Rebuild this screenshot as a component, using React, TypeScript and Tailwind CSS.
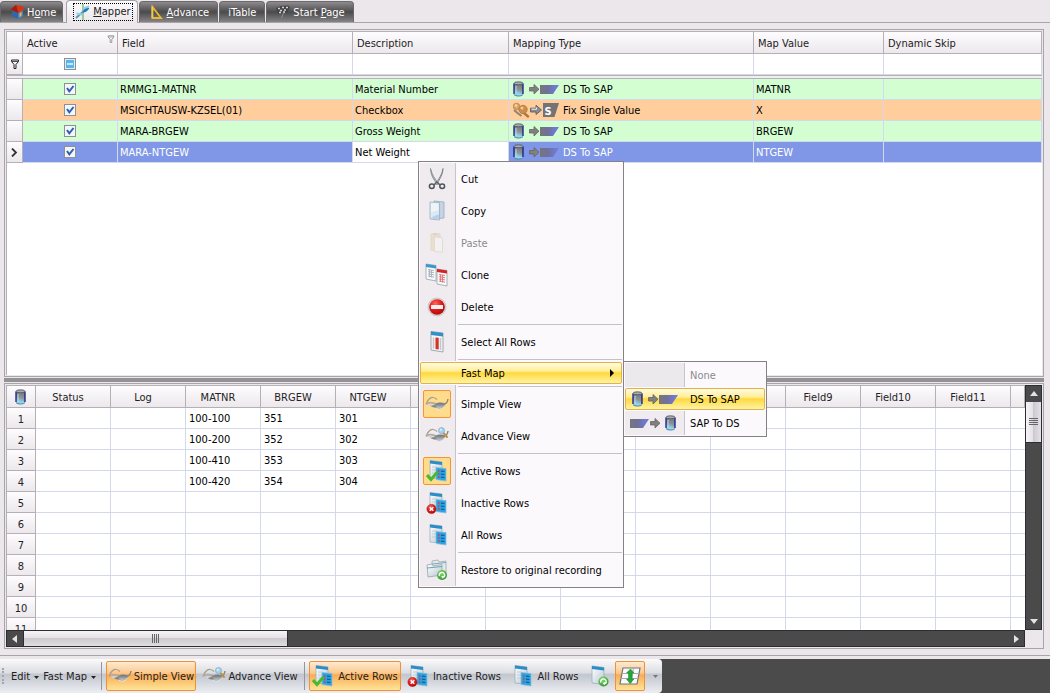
import type { ReactNode } from "react";
import clsx from "clsx";

type MapKind = "ds" | "fix";

type MappingRow = {
  field: string;
  description: string;
  kind: MapKind;
  type: string;
  value: string;
};

const mappingRows: MappingRow[] = [
  { field: "RMMG1-MATNR", description: "Material Number", kind: "ds", type: "DS To SAP", value: "MATNR" },
  { field: "MSICHTAUSW-KZSEL(01)", description: "Checkbox", kind: "fix", type: "Fix Single Value", value: "X" },
  { field: "MARA-BRGEW", description: "Gross Weight", kind: "ds", type: "DS To SAP", value: "BRGEW" },
  { field: "MARA-NTGEW", description: "Net Weight", kind: "ds", type: "DS To SAP", value: "NTGEW" },
];

const sheetColumns = ["Status", "Log", "MATNR", "BRGEW", "NTGEW", "", "", "", "", "", "Field9", "Field10", "Field11"];

const sheetData: string[][] = [
  ["", "", "100-100", "351", "301"],
  ["", "", "100-200", "352", "302"],
  ["", "", "100-410", "353", "303"],
  ["", "", "100-420", "354", "304"],
  [],
  [],
  [],
  [],
  [],
  [],
  [],
];

/* ---------- icons ---------- */

function Gradients() {
  return (
    <svg className="absolute size-0" aria-hidden="true">
      <defs>
        <linearGradient id="cyl" x1="0.3" y1="0" x2="0.1" y2="1">
          <stop offset="0" stopColor="#77777a" />
          <stop offset="0.45" stopColor="#8c9498" />
          <stop offset="0.8" stopColor="#90dcf4" />
          <stop offset="1" stopColor="#6cb4d8" />
        </linearGradient>
        <linearGradient id="sap" x1="0" y1="0" x2="1" y2="0">
          <stop offset="0" stopColor="#76767c" />
          <stop offset="0.4" stopColor="#70709a" />
          <stop offset="1" stopColor="#6f7fe8" />
        </linearGradient>
        <linearGradient id="lens" x1="0" y1="0" x2="0" y2="1">
          <stop offset="0" stopColor="#6a6c70" />
          <stop offset="1" stopColor="#c8ccd0" />
        </linearGradient>
        <linearGradient id="page" x1="0" y1="0" x2="1" y2="1">
          <stop offset="0" stopColor="#ffffff" />
          <stop offset="1" stopColor="#b9c8d4" />
        </linearGradient>
        <radialGradient id="red" cx="0.4" cy="0.3" r="0.8">
          <stop offset="0" stopColor="#ff6a60" />
          <stop offset="0.5" stopColor="#e01818" />
          <stop offset="1" stopColor="#9c0808" />
        </radialGradient>
        <radialGradient id="green" cx="0.4" cy="0.3" r="0.8">
          <stop offset="0" stopColor="#8be070" />
          <stop offset="1" stopColor="#238a28" />
        </radialGradient>
      </defs>
    </svg>
  );
}

function CylinderShape({ x = 0 }: { x?: number }) {
  return (
    <g transform={`translate(${x} 0)`}>
      <path d="M1 2v11.500C2 15.500 9 15.500 10 13.500V2z" fill="url(#cyl)" />
      <path d="M1 2.500v10.500M10 2.500v10.500" stroke="#141c84" strokeWidth="1.300" />
      <path d="M3 5v8" stroke="#b4d8e4" strokeWidth="1" />
      <path d="M1 13.500C2.500 15.600 8.500 15.600 10 13.500" stroke="#5c7ca0" strokeWidth="0.900" fill="none" />
      <ellipse cx="5.500" cy="2.300" rx="4.500" ry="1.500" fill="#a4acb0" stroke="#444c60" strokeWidth="0.800" />
    </g>
  );
}

function ArrowShape({ x = 0 }: { x?: number }) {
  return (
    <path
      transform={`translate(${x} 0)`}
      d="M.5 6.500h4.500v-3L10 8.200l-5 4.800V10H.5z"
      fill="#808080"
      stroke="#646464"
      strokeWidth="0.800"
    />
  );
}

function CylinderIcon() {
  return (
    <svg width="12" height="16" viewBox="0 0 12 16">
      <CylinderShape />
    </svg>
  );
}

function DsToSapIcon() {
  return (
    <svg width="47" height="16" viewBox="0 0 47 16" className="shrink-0">
      <CylinderShape />
      <ArrowShape x={16} />
      <path d="M27 4h19l-6 9H27z" fill="url(#sap)" />
    </svg>
  );
}

function SapToDsIcon() {
  return (
    <svg width="47" height="16" viewBox="0 0 47 16" className="shrink-0">
      <path d="M0 4h19l-6 9H0z" fill="url(#sap)" />
      <ArrowShape x={20} />
      <CylinderShape x={35} />
    </svg>
  );
}

function FixValueIcon() {
  return (
    <svg width="47" height="16" viewBox="0 0 47 16" className="shrink-0">
      <path d="M11 11l4 3.500" stroke="#b07840" strokeWidth="2.400" strokeLinecap="round" />
      <path d="M1 8l3.500 3 4 3" stroke="#8c8478" strokeWidth="2" fill="none" />
      <circle cx="3.500" cy="4.500" r="3.300" fill="#dca468" stroke="#b88450" strokeWidth="0.800" />
      <circle cx="10" cy="7.500" r="4.200" fill="#cc8c4c" stroke="#b07840" strokeWidth="0.800" />
      <circle cx="9" cy="6" r="1.500" fill="#f4cc90" />
      <circle cx="3" cy="3.500" r="1.200" fill="#f8d8a8" />
      <path d="M17.500 6.200h5.500v-3L28.500 8 23 12.500V10h-5.500z" fill="#8a8a8c" stroke="#606064" strokeWidth="0.900" />
      <path d="M18.500 7.200h5V5.500" stroke="#f4f4f4" strokeWidth="1" fill="none" />
      <path d="M30 1h16l-4.500 14H30z" fill="#747476" />
      <text x="31.500" y="12.500" fontSize="11" fontWeight="700" fill="#fff">
        S
      </text>
    </svg>
  );
}

function GlassesShape() {
  return (
    <>
      <path d="M1 9.500C2 6 5 2 8 2.500c2 .3 3 1 4 2" stroke="#a89c8c" strokeWidth="1.200" fill="none" />
      <path d="M1.500 9c3-2 7-1.500 11 1" stroke="#b4aca0" strokeWidth="1.800" fill="none" />
      <path d="M3 9.500c3-1 6-.5 8.500 1-1 2.500-6.500 2-8.500-1z" fill="#d0d2d4" />
      <path d="M10 9c3-1.500 7-1.500 10-.5 0 4-5.500 7-9.500 3.500z" fill="url(#lens)" stroke="#909296" strokeWidth="0.600" />
      <path d="M6 11c1.500 1.500 4 2 5.500 1l-1-2.500z" fill="#84888c" />
      <path d="M19 9c2 0 3.500-2 4-5" stroke="#8c8678" strokeWidth="1.500" fill="none" />
      <path d="M11 13.200c3.500 2.200 7 .5 8.500-2.500" stroke="#e4e6e8" strokeWidth="1" fill="none" />
    </>
  );
}

function GlassesIcon() {
  return (
    <svg width="24" height="20" viewBox="0 0 24 18">
      <GlassesShape />
    </svg>
  );
}

function GlassesSearchIcon() {
  return (
    <svg width="24" height="20" viewBox="0 0 24 18">
      <GlassesShape />
      <path d="M18.500 6l3.500 4" stroke="#c09048" strokeWidth="2" strokeLinecap="round" />
      <circle cx="16.500" cy="3.600" r="3" fill="#a0d4f0" stroke="#94b4c8" strokeWidth="1" />
      <circle cx="15.800" cy="2.800" r="1" fill="#e8f6fc" />
    </svg>
  );
}

function RowsIcon({ mark }: { mark?: "check" | "cross" }) {
  return (
    <svg width="22" height="24" viewBox="0 0 22 24" className="shrink-0">
      <path d="M4 1.500l12 1.500v17l-12-1z" fill="url(#page)" stroke="#9cb0bc" strokeWidth="0.800" />
      <path d="M4 1.500l12 1.500v3L4 4.500z" fill="#2a8cc8" />
      <path d="M6 8h5M6 11h4M6 14h4" stroke="#c0ccd4" />
      <path d="M10 8.500l10 1V22l-10-1.500z" fill="#2ca0e0" stroke="#8cc0dc" strokeWidth="0.800" />
      <path d="M12 12h1.500M12 15h1.500M12 18h1.500" stroke="#d04040" strokeWidth="1.500" />
      <path d="M15 12.200l3.500.300M15 15.200l3.500.300M15 18.200l3.500.300" stroke="#0c5c98" strokeWidth="1.200" />
      {mark === "check" && (
        <path d="M1 16l4 4.500L11.500 13" stroke="#48b82c" strokeWidth="3" fill="none" />
      )}
      {mark === "cross" && (
        <>
          <circle cx="5.500" cy="18" r="4.600" fill="url(#red)" stroke="#b02020" strokeWidth="0.600" />
          <path d="M3.700 16.200l3.600 3.600M7.300 16.200l-3.600 3.600" stroke="#fff" strokeWidth="1.500" />
        </>
      )}
    </svg>
  );
}

function RefreshBadge({ x, y }: { x: number; y: number }) {
  return (
    <g transform={`translate(${x} ${y})`}>
      <circle r="5" fill="url(#green)" />
      <path d="M-2.600 1A2.700 2.700 0 1 1 1.500 2.300" stroke="#fff" strokeWidth="1.300" fill="none" />
      <path d="M2.800 .6L.8 3.800-.9 1.200z" fill="#fff" />
    </g>
  );
}

function CutIcon() {
  return (
    <svg width="20" height="24" viewBox="0 0 20 24">
      <path d="M3.500 1.500C5 8 8 12 12 17l-1.500.5C6 12 4 8 3.500 1.500z" fill="#b4bcc0" stroke="#7c8488" strokeWidth="0.800" />
      <path d="M16 1.500c-1 6-4 10.500-8 15.500l1.500.5C13 12 16 7 16 1.500z" fill="#c8d0d4" stroke="#70787c" strokeWidth="0.800" />
      <ellipse cx="4.800" cy="19.300" rx="2.400" ry="2.200" fill="none" stroke="#4c5256" strokeWidth="1.500" />
      <ellipse cx="15.200" cy="19.300" rx="2.400" ry="2.200" fill="none" stroke="#4c5256" strokeWidth="1.500" />
      <path d="M6.800 18l3-3 3.400 3" stroke="#5c6266" strokeWidth="1.300" fill="none" />
    </svg>
  );
}

function CopyIcon() {
  return (
    <svg width="20" height="24" viewBox="0 0 20 24">
      <path d="M7 2l10 1v16l-10 1z" fill="#c4d4e4" stroke="#98acbc" strokeWidth="0.800" />
      <path d="M3 3l9.500.5V21L3 20z" fill="#dce8f2" stroke="#9cb0c0" strokeWidth="0.800" />
      <path d="M4 4l7.500.500v7C9 11 7 13 4 13z" fill="#eef4f8" />
      <path d="M4 19.500c3-3 6-4 8-4v5z" fill="#b8d0e8" />
    </svg>
  );
}

function PasteIcon() {
  return (
    <svg width="20" height="24" viewBox="0 0 20 24" opacity="0.45">
      <path d="M4 3l9-.5v16l-9 1z" fill="#e8d0a4" stroke="#d8c090" strokeWidth="0.800" />
      <path d="M7.500 6l7 .500 1 1V21l-8-.500z" fill="#fbf7f2" stroke="#c8bcb4" strokeWidth="0.800" />
      <path d="M6 2h4v2H6z" fill="#b8b8b8" />
    </svg>
  );
}

function SheetShape({ x, y, color, body }: { x: number; y: number; color: string; body: string }) {
  return (
    <g transform={`translate(${x} ${y})`}>
      <path d="M0 0l10 1.500V17L0 15z" fill="#f6f8fa" stroke="#98a4ac" strokeWidth="0.800" />
      <path d="M0 0l10 1.500v3L0 3z" fill={color} />
      <path d="M2 5.500l6 1M2 7.700l6 1M2 9.900l6 1M2 12.100l6 1M3.500 5.500v7.500M5.500 6v7.500" stroke={body} strokeWidth="0.900" />
    </g>
  );
}

function CloneIcon() {
  return (
    <svg width="24" height="24" viewBox="0 0 24 24">
      <SheetShape x={1} y={1} color="#3a98cc" body="#a8b0b8" />
      <SheetShape x={12} y={6} color="#d42424" body="#e47070" />
    </svg>
  );
}

function DeleteIcon() {
  return (
    <svg width="20" height="22" viewBox="0 0 20 22">
      <circle cx="10" cy="11" r="9" fill="#dcd8da" stroke="#c4bec0" strokeWidth="0.800" />
      <circle cx="10" cy="11" r="7.800" fill="url(#red)" />
      <rect x="4" y="9" width="12" height="4" rx="0.500" fill="#fbeeee" />
    </svg>
  );
}

function SelectAllIcon() {
  return (
    <svg width="18" height="24" viewBox="0 0 18 24">
      <path d="M3 1.500l12 1.500v19L3 20z" fill="#f4f6f8" stroke="#96a0a8" strokeWidth="0.900" />
      <path d="M3 1.500l12 1.500v3.500L3 5z" fill="#3090c8" />
      <path d="M5.500 7.500v11M12.500 8v12" stroke="#c4c8cc" strokeWidth="1.500" />
      <path d="M7.500 7.500l3.200.300v11.700l-3.200-.5z" fill="#d43424" />
    </svg>
  );
}

function RestoreIcon() {
  return (
    <svg width="24" height="24" viewBox="0 0 24 24">
      <path d="M7 3l6-1 1 2 7-1v12l-14 2z" fill="#e4e9ec" stroke="#a0acb2" strokeWidth="0.800" />
      <path d="M7 6l14-1.500" stroke="#7ca8b8" />
      <path d="M2 7l5-1 1 2 9-1.500V17L3 19z" fill="url(#page)" stroke="#94a4ac" strokeWidth="0.800" />
      <path d="M2 10l15-1.500" stroke="#70a0b4" strokeWidth="1.200" />
      <RefreshBadge x={17} y={17} />
    </svg>
  );
}

function ReloadPageIcon() {
  return (
    <svg width="20" height="24" viewBox="0 0 20 24">
      <path d="M2 2l12 1.500v17L2 19z" fill="url(#page)" stroke="#9cb0bc" strokeWidth="0.800" />
      <path d="M2 2l12 1.500v3L2 5z" fill="#2a8cc8" />
      <RefreshBadge x={13.500} y={17.500} />
    </svg>
  );
}

function FitRowsIcon() {
  return (
    <svg width="22" height="20" viewBox="0 0 22 20">
      <path d="M4 2h17l-3 16H1z" fill="#fafafa" stroke="#707478" strokeWidth="1.200" />
      <path d="M3 7.500h16.500M2 12.500h16.500M14.500 2l-2.500 16" stroke="#a8acb0" />
      <path d="M11.500 3l3.500 4h-2v6h2l-4 4.500L7.500 13h2V7h-2z" fill="#22a838" stroke="#188428" strokeWidth="0.500" />
    </svg>
  );
}

function HomeIcon() {
  return (
    <svg width="16" height="16" viewBox="0 0 16 16">
      <path d="M3 6l6 2v7l-6-3z" fill="#2c68b0" />
      <path d="M9 8l5-3v7l-5 3z" fill="#3c84c8" />
      <path d="M1.500 5.500L7 1l7 1.500 1 3-5.500 3.500z" fill="#d83418" />
      <path d="M7 1l2.500 8-3-1-5-2.500z" fill="#a02010" />
      <path d="M10.500 9l2-1v4l-2 1z" fill="#f0b048" />
    </svg>
  );
}

function MapperIcon() {
  return (
    <svg width="16" height="16" viewBox="0 0 16 16">
      <path d="M8 0v16" stroke="#58b858" strokeWidth="1.200" />
      <path d="M1 14L11 5" stroke="#5c9cc0" strokeWidth="2" />
      <path d="M1.500 9.500l6 1M8 4.500l6-2" stroke="#90d0e4" strokeWidth="2" />
      <path d="M8 8.500c3 0 5-2 6.500-4.500-3-.5-6 1-6.500 4.500z" fill="#2878c0" />
    </svg>
  );
}

function RulerIcon() {
  return (
    <svg width="14" height="16" viewBox="0 0 14 16">
      <path d="M1.500 3v11h8.500z" fill="none" stroke="#e8b830" strokeWidth="1.800" />
      <path d="M1 2.500v11.500" stroke="#fbe488" strokeWidth="0.800" />
    </svg>
  );
}

function FlagIcon() {
  return (
    <svg width="16" height="16" viewBox="0 0 16 16">
      <path d="M1 4l5-2 7-.5 2 1.500-3 6-4-.500-5 1.500z" fill="#444" />
      <path d="M3 4.500h2M7 3.500h2M11 3.500h2M5 6.500h2M9 6h2M4 8.500h2M8 8.200h2" stroke="#d4d4d4" strokeWidth="1.700" />
      <path d="M9 8l-2.500 6" stroke="#909090" />
    </svg>
  );
}

function FunnelIcon({ className }: { className?: string }) {
  return (
    <svg width="8" height="10" viewBox="0 0 8 10" className={className}>
      <path d="M.5 1h7v1.500L5 5.500v4H3v-4L.5 2.500z" fill="none" stroke="currentColor" />
      <path d="M1 2.500h6" stroke="currentColor" strokeWidth="0.800" />
    </svg>
  );
}

/* ---------- tabs ---------- */

function Tab({
  icon,
  children,
  active,
  className,
}: {
  icon?: ReactNode;
  children: ReactNode;
  active?: boolean;
  className?: string;
}) {
  if (active) {
    return (
      <button
        type="button"
        role="tab"
        aria-selected="true"
        className="relative mr-px ml-0.5 -mb-px flex h-[23px] items-center rounded-t border border-b-0 border-[#a4a0a4] bg-linear-to-b from-[#fbfafb] to-[#ebe7eb] pr-1 pl-1.5 text-[#222]"
      >
        <span className="flex h-[18px] items-center gap-0.5 border border-dotted border-black px-px">
          {icon}
          <span>{children}</span>
        </span>
      </button>
    );
  }
  return (
    <button
      type="button"
      role="tab"
      aria-selected="false"
      className={clsx(
        "mr-px flex h-[21px] items-center gap-0.5 rounded-t border border-b-0 border-[#6a686a] bg-linear-to-b from-[#8e8c8e] via-[#4c4b4c] to-[#868486] text-white",
        className,
      )}
    >
      {icon}
      <span className="pt-0.5">{children}</span>
    </button>
  );
}

function TabStrip() {
  return (
    <div role="tablist" className="flex h-[23px] shrink-0 items-end border-b border-[#a8a5a8]">
      <Tab icon={<HomeIcon />} className="pr-1.5 pl-2">
        H<u>o</u>me
      </Tab>
      <Tab icon={<MapperIcon />} active>
        <u>M</u>apper
      </Tab>
      <Tab icon={<RulerIcon />} className="pr-2 pl-[11px]">
        <u>A</u>dvance
      </Tab>
      <Tab className="px-2">iTable</Tab>
      <Tab icon={<FlagIcon />} className="px-2">
        Start <u>P</u>age
      </Tab>
    </div>
  );
}

/* ---------- mapping grid ---------- */

function ActiveCheck({ label, mixed }: { label: string; mixed?: boolean }) {
  return (
    <label className="mx-auto grid size-3 place-items-center">
      <input
        type="checkbox"
        aria-label={label}
        defaultChecked={!mixed}
        className={clsx(
          "col-start-1 row-start-1 size-3 appearance-none border border-[#8c9098]",
          mixed ? "bg-[#d8effc]" : "bg-[#f4f6f8]",
        )}
      />
      <svg viewBox="0 0 12 12" className="pointer-events-none col-start-1 row-start-1 size-3">
        {mixed ? (
          <>
            <path d="M2 2h8v8H2z" fill="#5cb4ec" />
            <path d="M3 6h6" stroke="#e4f4fc" strokeWidth="1.600" />
          </>
        ) : (
          <path d="M3 5l2.300 3.300L9.500 3" stroke="#2c60b4" strokeWidth="2" fill="none" />
        )}
      </svg>
    </label>
  );
}

const headCell =
  "border-r border-b border-[#b4b0b4] bg-linear-to-b from-[#fefcfe] to-[#ece8ec] font-normal text-[#222]";

function MappingGrid() {
  const last = mappingRows.length - 1;
  return (
    <div className="min-h-40 flex-1 overflow-hidden border border-[#a8a5a8] bg-[#ebe7eb] p-px">
      <div className="h-full border-t border-l border-[#b4b0b4] bg-white">
        <table className="w-full table-fixed border-separate border-spacing-0 text-left">
          <colgroup>
            <col className="w-4" />
            <col className="w-[95px]" />
            <col className="w-[235px]" />
            <col className="w-[156px]" />
            <col className="w-[245px]" />
            <col className="w-[130px]" />
            <col />
          </colgroup>
          <thead>
            <tr className="h-[22px]">
              <th className={headCell} />
              <th className={clsx(headCell, "pt-0.5")}>
                <div className="flex items-center justify-between pr-0.5 pl-1">
                  Active
                  <FunnelIcon className="mb-2.5 size-2 text-[#888]" />
                </div>
              </th>
              <th className={clsx(headCell, "px-1 pt-0.5")}>Field</th>
              <th className={clsx(headCell, "px-1 pt-0.5")}>Description</th>
              <th className={clsx(headCell, "px-1 pt-0.5")}>Mapping Type</th>
              <th className={clsx(headCell, "px-1 pt-0.5")}>Map Value</th>
              <th className={clsx(headCell, "px-1 pt-0.5")}>Dynamic Skip</th>
            </tr>
            <tr className="h-[21px]">
              <td className={headCell}>
                <FunnelIcon className="mx-auto text-[#222]" />
              </td>
              <td className="border-r border-b border-[#d4d8ec]">
                <ActiveCheck label="Filter active rows" mixed />
              </td>
              {["Field", "Description", "Mapping Type", "Map Value", "Dynamic Skip"].map((name) => (
                <td key={name} className="border-r border-b border-[#d4d8ec]">
                  <input aria-label={`Filter ${name}`} className="block h-4 w-full px-1 outline-none" />
                </td>
              ))}
            </tr>
            <tr className="h-1">
              <td colSpan={7} className="border-y border-[#b4b0b4] bg-[#f2eff2] p-0" />
            </tr>
          </thead>
          <tbody>
            {mappingRows.map((row, i) => {
              const cell = clsx(
                "border-r border-b border-[#d4d8ec] px-0.5",
                i === last && "bg-[#7f97e6] text-white",
                i !== last && row.kind === "ds" && "bg-[#d2fed2]",
                row.kind === "fix" && "bg-[#ffce9c]",
              );
              return (
                <tr key={row.field} className="h-[21px]">
                  <td className={headCell}>
                    {i === last && (
                      <svg width="7" height="9" viewBox="0 0 7 9" className="mx-auto">
                        <path d="M1 .5l4 4-4 4" stroke="#333" strokeWidth="1.800" fill="none" />
                      </svg>
                    )}
                  </td>
                  <td className={cell}>
                    <ActiveCheck label={`${row.field} active`} />
                  </td>
                  <td className={clsx(cell, "pt-0.5")}>{row.field}</td>
                  <td
                    className={
                      i === last ? "border-r border-b border-[#d4d8ec] bg-white px-0.5 pt-0.5" : clsx(cell, "pt-0.5")
                    }
                  >
                    {row.description}
                  </td>
                  <td className={cell}>
                    <div className="flex items-center gap-[3px] pl-0.5">
                      {row.kind === "ds" ? <DsToSapIcon /> : <FixValueIcon />}
                      <span className="pt-0.5">{row.type}</span>
                    </div>
                  </td>
                  <td className={clsx(cell, "pt-0.5")}>{row.value}</td>
                  <td className={cell} />
                </tr>
              );
            })}
          </tbody>
        </table>
      </div>
    </div>
  );
}

/* ---------- data sheet ---------- */

function ScrollArrow({ label, d }: { label: string; d: string }) {
  return (
    <button type="button" aria-label={label} className="grid size-4 shrink-0 place-items-center">
      <svg width="10" height="10" viewBox="0 0 10 10">
        <path d={d} fill="#e4e2e4" />
      </svg>
    </button>
  );
}

function DataSheet() {
  return (
    <div className="flex h-[266px] shrink-0 flex-col border border-[#a8a5a8] bg-[#ebe7eb] p-px">
      <div className="flex min-h-0 flex-1">
        <div className="min-w-0 flex-1 overflow-hidden border-t border-l border-[#b4b0b4] bg-white">
          <table className="w-full table-fixed border-separate border-spacing-0 text-left">
            <colgroup>
              <col className="w-[29px]" />
              {sheetColumns.map((_, i) => (
                <col key={i} className="w-[75px]" />
              ))}
              <col />
            </colgroup>
            <thead>
              <tr className="h-[22px]">
                <th className={headCell}>
                  <div className="flex justify-center">
                    <CylinderIcon />
                  </div>
                </th>
                {sheetColumns.map((name, i) => (
                  <th key={i} className={clsx(headCell, "pt-0.5 pr-2.5 text-center")}>
                    {name}
                  </th>
                ))}
                <th className={headCell} />
              </tr>
            </thead>
            <tbody>
              {sheetData.map((values, r) => (
                <tr key={r} className="h-[21px]">
                  <th className={clsx(headCell, "pt-[3px] text-center")}>{r + 1}</th>
                  {sheetColumns.map((_, c) => (
                    <td key={c} className="border-r border-b border-[#d4d8ec] px-[3px] pt-0.5">
                      {values[c]}
                    </td>
                  ))}
                  <td className="border-b border-[#d4d8ec]" />
                </tr>
              ))}
            </tbody>
          </table>
        </div>
        <div className="flex w-[17px] flex-col border border-[#2c2c34] bg-[#4a4a4a]">
          <ScrollArrow label="Scroll up" d="M5 2l4 5H1z" />
          <div className="grid h-[41px] place-items-center border-b border-[#2c2c34] bg-[linear-gradient(90deg,#f6f4f6_0%,#e4e2e6_45%,#cccad0_50%,#e4e2e8_100%)]">
            <svg width="9" height="8" viewBox="0 0 9 8">
              <path d="M0 .5h9M0 2.500h9M0 4.500h9M0 6.500h9" stroke="#666" />
            </svg>
          </div>
          <div className="flex-1" />
          <ScrollArrow label="Scroll down" d="M5 8l4-5H1z" />
        </div>
      </div>
      <div className="mr-[17px] flex h-[17px] shrink-0 items-center border border-[#2c2c34] bg-[#4a4a4a]">
        <ScrollArrow label="Scroll left" d="M2 5l5-4v8z" />
        <div className="grid h-full w-[265px] place-items-center border-x border-[#2c2c34] bg-[linear-gradient(180deg,#f6f4f6_0%,#e4e2e4_45%,#cccacc_50%,#e0dee0_100%)]">
          <svg width="8" height="9" viewBox="0 0 8 9">
            <path d="M.5 0v9M2.500 0v9M4.500 0v9M6.500 0v9" stroke="#666" />
          </svg>
        </div>
        <div className="flex-1" />
        <ScrollArrow label="Scroll right" d="M8 5L3 1v8z" />
      </div>
    </div>
  );
}

/* ---------- context menu ---------- */

function MenuItem({
  icon,
  children,
  disabled,
  pressed,
}: {
  icon: ReactNode;
  children: ReactNode;
  disabled?: boolean;
  pressed?: boolean;
}) {
  return (
    <button
      type="button"
      role="menuitem"
      disabled={disabled}
      className="flex h-8 w-full items-center text-left text-black disabled:text-[#8c8a8c]"
    >
      <span className="flex h-full w-9 shrink-0 items-center border-r border-[#c8c4c8] bg-[#efebef] pl-[3px]">
        <span
          className={clsx(
            "grid size-7 place-items-center rounded-xs border",
            pressed ? "border-[#f89430] bg-[#ffdc8c]" : "border-transparent",
          )}
        >
          {icon}
        </span>
      </span>
      <span className="pt-0.5 pl-[5px]">{children}</span>
    </button>
  );
}

function MenuSeparator() {
  return (
    <div role="separator" className="flex h-[3px] items-center">
      <span className="h-full w-9 shrink-0 border-r border-[#c8c4c8] bg-[#efebef]" />
      <span className="ml-0.5 h-px flex-1 bg-[#c4c0c4]" />
    </div>
  );
}

const hotItem =
  "rounded-xs border border-[#e4b048] bg-[linear-gradient(180deg,#fffbe0_0%,#ffee98_40%,#ffd83c_50%,#fff4a8_100%)]";

function ContextMenu() {
  return (
    <div
      role="menu"
      aria-label="Row menu"
      className="absolute top-[161px] left-[418px] w-[206px] border border-[#848284] bg-[#fcf9fc] p-px"
    >
      <MenuItem icon={<CutIcon />}>Cut</MenuItem>
      <MenuItem icon={<CopyIcon />}>Copy</MenuItem>
      <MenuItem icon={<PasteIcon />} disabled>
        Paste
      </MenuItem>
      <MenuItem icon={<CloneIcon />}>Clone</MenuItem>
      <MenuItem icon={<DeleteIcon />}>Delete</MenuItem>
      <MenuSeparator />
      <MenuItem icon={<SelectAllIcon />}>Select All Rows</MenuItem>
      <MenuSeparator />
      <button
        type="button"
        role="menuitem"
        aria-haspopup="menu"
        className={clsx(hotItem, "my-px flex h-[22px] w-full items-center justify-between pr-1.5 pl-10 text-black")}
      >
        <span className="pt-0.5">Fast Map</span>
        <svg width="6" height="8" viewBox="0 0 6 8">
          <path d="M1 0l4 4-4 4z" fill="#000" />
        </svg>
      </button>
      <MenuSeparator />
      <MenuItem icon={<GlassesIcon />} pressed>
        Simple View
      </MenuItem>
      <MenuItem icon={<GlassesSearchIcon />}>Advance View</MenuItem>
      <MenuSeparator />
      <MenuItem icon={<RowsIcon mark="check" />} pressed>
        Active Rows
      </MenuItem>
      <MenuItem icon={<RowsIcon mark="cross" />}>Inactive Rows</MenuItem>
      <MenuItem icon={<RowsIcon />}>All Rows</MenuItem>
      <MenuSeparator />
      <MenuItem icon={<RestoreIcon />}>Restore to original recording</MenuItem>
    </div>
  );
}

function FastMapMenu() {
  return (
    <div
      role="menu"
      aria-label="Fast Map"
      className="absolute top-[361px] left-[623px] w-36 border border-[#848284] bg-[#fcf9fc] p-px"
    >
      <button type="button" role="menuitem" disabled className="flex h-6 w-full items-center text-[#8c8a8c]">
        <span className="h-full w-[60px] border-r border-[#c8c4c8] bg-[#ebe9eb]" />
        <span className="pt-0.5 pl-[5px]">None</span>
      </button>
      <button
        type="button"
        role="menuitem"
        className={clsx(hotItem, "my-px flex h-[22px] w-full items-center text-black")}
      >
        <span className="flex w-[59px] justify-start pl-1.5">
          <DsToSapIcon />
        </span>
        <span className="pt-0.5 pl-[5px]">DS To SAP</span>
      </button>
      <button type="button" role="menuitem" className="flex h-6 w-full items-center text-black">
        <span className="flex h-full w-[60px] items-center border-r border-[#c8c4c8] bg-[#efebef] pl-[5px]">
          <SapToDsIcon />
        </span>
        <span className="pt-0.5 pl-[5px]">SAP To DS</span>
      </button>
    </div>
  );
}

/* ---------- toolbar ---------- */

function Caret({ className }: { className?: string }) {
  return (
    <svg width="5" height="3" viewBox="0 0 5 3" className={className}>
      <path d="M0 0h5L2.500 3z" fill="currentColor" />
    </svg>
  );
}

function ToolButton({
  icon,
  children,
  pressed,
  label,
  className,
}: {
  icon?: ReactNode;
  children?: ReactNode;
  pressed?: boolean;
  label?: string;
  className?: string;
}) {
  return (
    <button
      type="button"
      aria-label={label}
      className={clsx(
        "flex h-[30px] shrink-0 items-center justify-center rounded-xs border whitespace-nowrap",
        pressed
          ? "border-[#f09038] bg-[linear-gradient(180deg,#fdead0_0%,#fcc88c_40%,#fbac54_46%,#fee498_100%)]"
          : "border-transparent",
        className,
      )}
    >
      {icon}
      {children && <span className="flex items-center gap-1 pt-0.5">{children}</span>}
    </button>
  );
}

function Toolbar() {
  return (
    <div className="flex h-[34px] shrink-0 bg-[#4c4b4c]">
      <div
        role="toolbar"
        className="flex items-center rounded-r-sm bg-[linear-gradient(180deg,#fbfafb_0%,#dcdee2_40%,#c2c6ce_46%,#eceef2_100%)] text-[#222]"
      >
        <span className="ml-0.5 h-4 border-l-2 border-dotted border-[#a4a6ac]" />
        <ToolButton className="ml-1.5">
          Edit <Caret />
        </ToolButton>
        <ToolButton className="ml-0.5">
          Fast Map <Caret />
        </ToolButton>
        <span className="mx-1 h-7 w-px bg-[#94969c]" />
        <ToolButton icon={<GlassesIcon />} pressed className="w-[90px] gap-0.5">
          Simple View
        </ToolButton>
        <ToolButton icon={<GlassesSearchIcon />} className="ml-1 w-[100px] gap-0.5">
          Advance View
        </ToolButton>
        <span className="mx-1 h-7 w-px bg-[#94969c]" />
        <ToolButton icon={<RowsIcon mark="check" />} pressed className="w-[92px] gap-1">
          Active Rows
        </ToolButton>
        <ToolButton icon={<RowsIcon mark="cross" />} className="ml-1 w-[98px] gap-1">
          Inactive Rows
        </ToolButton>
        <ToolButton icon={<RowsIcon />} className="ml-1.5 w-[72px] gap-1">
          All Rows
        </ToolButton>
        <ToolButton icon={<ReloadPageIcon />} label="Reload" className="ml-1.5 w-[26px]" />
        <ToolButton icon={<FitRowsIcon />} label="Fit rows" pressed className="ml-0.5 w-[30px]" />
        <button type="button" aria-label="Toolbar options" className="grid h-full w-[17px] place-items-center pl-1">
          <Caret className="text-[#74767c]" />
        </button>
      </div>
    </div>
  );
}

export default function App() {
  return (
    <div className="relative flex h-screen flex-col overflow-hidden bg-[#ebe7eb] font-['DejaVu_Sans_Condensed','DejaVu_Sans',sans-serif] text-[11px] leading-4 text-black">
      <Gradients />
      <TabStrip />
      <main className="flex min-h-0 flex-1 flex-col border-b border-[#a8a5a8] pt-1.5 pr-1.5 pb-1.5 pl-1">
        <MappingGrid />
        <div className="my-px h-1 shrink-0 bg-[#949294]" />
        <DataSheet />
      </main>
      <div className="h-[3px] shrink-0" />
      <Toolbar />
      <ContextMenu />
      <FastMapMenu />
    </div>
  );
}
